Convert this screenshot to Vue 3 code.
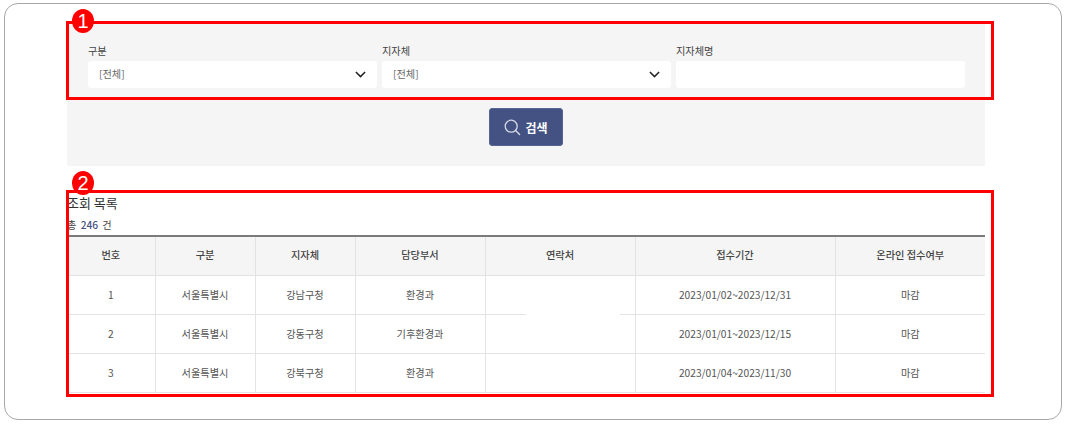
<script setup>
const fields = [
  { label: '구분', value: '[전체]', select: true },
  { label: '지자체', value: '[전체]', select: true },
  { label: '지자체명', value: '', select: false }
];

const columns = ['번호', '구분', '지자체', '담당부서', '연락처', '접수기간', '온라인 접수여부'];

const rows = [
  { no: 1, type: '서울특별시', gu: '강남구청', dept: '환경과', tel: '', period: '2023/01/02~2023/12/31', state: '마감' },
  { no: 2, type: '서울특별시', gu: '강동구청', dept: '기후환경과', tel: '', period: '2023/01/01~2023/12/15', state: '마감' },
  { no: 3, type: '서울특별시', gu: '강북구청', dept: '환경과', tel: '', period: '2023/01/04~2023/11/30', state: '마감' }
];
</script>

<template>
  <div class="page">
    <div class="frame">
      <section class="search">
        <div class="fields">
          <div v-for="f in fields" :key="f.label" class="field">
            <label>{{ f.label }}</label>
            <div class="control">
              <span>{{ f.value }}</span>
              <svg v-if="f.select" width="11" height="7" viewBox="0 0 11 7">
                <path d="M.9 1 5.5 5.6 10.1 1" fill="none" stroke="#222" stroke-width="1.5" />
              </svg>
            </div>
          </div>
        </div>
        <button class="search-btn" type="button">
          <svg width="17" height="17" viewBox="0 0 17 17">
            <circle cx="7.2" cy="7.2" r="6" fill="none" stroke="#d5d9e5" stroke-width="1.3" />
            <path d="m11.6 11.6 4 4" stroke="#d5d9e5" stroke-width="1.4" stroke-linecap="round" />
          </svg>
          <span>검색</span>
        </button>
      </section>

      <section class="result">
        <h2>조회 목록</h2>
        <p class="total">총 <b>246</b> 건</p>
        <div class="table-wrap">
          <table>
            <colgroup>
              <col class="c-no" />
              <col class="c-type" />
              <col class="c-gu" />
              <col class="c-dept" />
              <col class="c-tel" />
              <col class="c-period" />
              <col class="c-state" />
            </colgroup>
            <thead>
              <tr>
                <th v-for="c in columns" :key="c"><span>{{ c }}</span></th>
              </tr>
            </thead>
            <tbody>
              <tr v-for="r in rows" :key="r.no">
                <td><span>{{ r.no }}</span></td>
                <td><span>{{ r.type }}</span></td>
                <td><span>{{ r.gu }}</span></td>
                <td><span>{{ r.dept }}</span></td>
                <td><span>{{ r.tel }}</span></td>
                <td><span>{{ r.period }}</span></td>
                <td><span>{{ r.state }}</span></td>
              </tr>
            </tbody>
          </table>
          <div class="mask"></div>
        </div>
      </section>

      <div class="mark mark-1"><span class="badge">1</span></div>
      <div class="mark mark-2"><span class="badge">2</span></div>
    </div>
  </div>
</template>

<style>
html,
body {
  background: #fff;
  overflow: hidden;
}
</style>

<style scoped>
.page {
  width: 1067px;
  height: 425px;
  padding: 3px 5px 0 4px;
  box-sizing: border-box;
  font-family: 'Noto Sans CJK KR', 'Noto Sans', sans-serif;
  color: #444;
}

.frame {
  position: relative;
  height: 417px;
  box-sizing: border-box;
  padding: 18px 76px 0 62px;
  border: 1px solid #a8a8a8;
  border-radius: 14px;
}

.search {
  height: 144px;
  background: #f5f5f5;
  padding: 20px 21px 0;
  box-sizing: border-box;
}

.fields {
  display: grid;
  grid-template-columns: repeat(3, 289px);
  gap: 5px;
}

.field label {
  display: block;
  height: 19px;
  font-size: 10.2px;
  line-height: 17px;
  color: #444;
}

.control {
  display: flex;
  align-items: center;
  justify-content: space-between;
  height: 27px;
  padding: 0 11px;
  background: #fff;
  border-radius: 3px;
  font-size: 10.2px;
  color: #666;
}

.control span {
  padding-bottom: 2px;
}

.search-btn {
  display: flex;
  align-items: center;
  justify-content: center;
  gap: 4px;
  width: 74px;
  height: 38px;
  margin: 20px auto 0;
  padding: 0;
  border: 1px solid #56648f;
  border-radius: 3px;
  background: #435283;
  color: #fff;
  font-family: inherit;
  font-size: 12px;
  font-weight: 700;
}

.result {
  padding-top: 27px;
}

h2 {
  margin: 0;
  height: 20px;
  font-size: 13px;
  font-weight: 400;
  line-height: 20px;
  color: #333;
}

.total {
  margin: 2px 0 0;
  height: 20px;
  font-size: 10.2px;
  line-height: 20px;
  color: #444;
}

.total b {
  margin: 0 2px;
  font-weight: 500;
  color: #435283;
}

.table-wrap {
  position: relative;
  width: 918px;
  border-top: 2px solid #7a7a7a;
}

table {
  width: 918px;
  table-layout: fixed;
  border-collapse: collapse;
  font-size: 10.2px;
  text-align: center;
}

.c-no {
  width: 88px;
}

.c-type,
.c-gu {
  width: 100px;
}

.c-dept {
  width: 130px;
}

.c-tel,
.c-state {
  width: 150px;
}

.c-period {
  width: 200px;
}

th {
  height: 38px;
  padding: 0 0 2px;
  box-sizing: border-box;
  background: #f5f5f5;
  font-weight: 500;
  color: #444;
  border-bottom: 1px solid #e2e2e2;
  border-right: 1px solid #e2e2e2;
}

td {
  height: 39px;
  padding: 0;
  box-sizing: border-box;
  color: #555;
  border-bottom: 1px solid #e4e4e4;
  border-right: 1px solid #e4e4e4;
}

th:last-child,
td:last-child {
  border-right: 0;
}

.mask {
  position: absolute;
  left: 459px;
  top: 73px;
  width: 94px;
  height: 8px;
  background: #fff;
}

.mark {
  position: absolute;
  left: 61px;
  width: 928px;
  box-sizing: border-box;
  border: 3px solid #f00;
}

.mark-1 {
  top: 17px;
  height: 79px;
}

.mark-2 {
  top: 186px;
  height: 207px;
}

.badge {
  position: absolute;
  left: 3px;
  top: -15px;
  width: 22px;
  height: 24px;
  border-radius: 50%;
  background: #f00;
  color: #fff;
  font-family: 'Liberation Sans', sans-serif;
  font-size: 20px;
  line-height: 24px;
  text-align: center;
}

.mark-2 .badge {
  top: -22px;
}
</style>
